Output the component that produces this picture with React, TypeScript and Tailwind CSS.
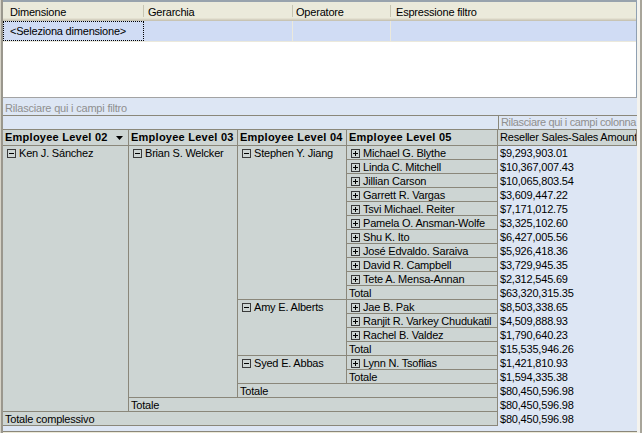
import React from 'react';

const line = 'border-[#8a877a]';
const cell = `bg-[#cdd5d3] border-r border-b ${line} whitespace-nowrap leading-[14px]`;

function Toggle({ plus }: { plus?: boolean }) {
  return (
    <svg width="9" height="9" viewBox="0 0 9 9" className="shrink-0 mt-[3px]">
      <rect x="0.5" y="0.5" width="8" height="8" fill="none" stroke="#3a3a3a" />
      <path d="M2 4.5h5" stroke="#000" />
      {plus && <path d="M4.5 2v5" stroke="#000" />}
    </svg>
  );
}

function Member({ name, plus, className = '' }: { name: string; plus?: boolean; className?: string }) {
  return (
    <div className={`${cell} ${className} flex items-start gap-[3px] pl-[4px]`}>
      <Toggle plus={plus} />
      <span>{name}</span>
    </div>
  );
}

function Plain({ text, className = '' }: { text: string; className?: string }) {
  return <div className={`${cell} ${className} pl-[2px]`}>{text}</div>;
}

function Value({ v }: { v: string }) {
  return <div className="pl-[2px] leading-[14px] whitespace-nowrap">{v}</div>;
}

const stephen = [
  ['Michael G. Blythe', '$9,293,903.01'],
  ['Linda C. Mitchell', '$10,367,007.43'],
  ['Jillian Carson', '$10,065,803.54'],
  ['Garrett R. Vargas', '$3,609,447.22'],
  ['Tsvi Michael. Reiter', '$7,171,012.75'],
  ['Pamela O. Ansman-Wolfe', '$3,325,102.60'],
  ['Shu K. Ito', '$6,427,005.56'],
  ['José Edvaldo. Saraiva', '$5,926,418.36'],
  ['David R. Campbell', '$3,729,945.35'],
  ['Tete A. Mensa-Annan', '$2,312,545.69'],
];

const amy = [
  ['Jae B. Pak', '$8,503,338.65'],
  ['Ranjit R. Varkey Chudukatil', '$4,509,888.93'],
  ['Rachel B. Valdez', '$1,790,640.23'],
];

function Arrow() {
  return (
    <svg width="7" height="4" viewBox="0 0 7 4" className="ml-[8px] shrink-0">
      <path d="M0 0h7L3.5 4z" fill="#000" />
    </svg>
  );
}

export default function App() {
  return (
    <div className="w-[642px] h-[433px] flex bg-[#ece9d8] text-[11px] tracking-[-0.2px] text-black font-['Liberation_Sans',Arial,sans-serif] overflow-hidden">
      {/* left frame */}
      <div className="w-[3px] bg-[#9a978d] border-l border-[#d6d3c7]" />

      <div className="w-[634px] flex flex-col">
        {/* filter grid */}
        <div className="h-[98px] bg-white border-t-2 border-t-[#98a3ad] border-b border-b-[#a3a3a3] border-r border-r-[#8fa0b2] flex flex-col">
          <div className="flex h-[19px] bg-[#ebeadb] pt-[2px] leading-[17px] shadow-[inset_0_-1px_0_#c8c4b3,inset_0_-2px_0_#d6d2c2,inset_0_-3px_0_#e3e0d0]">
            <div className="w-[140px] pl-[7px]">Dimensione</div>
            <div className="w-px bg-[#c7c5b2] mt-px mb-[4px]" />
            <div className="w-[148px] pl-[4px]">Gerarchia</div>
            <div className="w-px bg-[#c7c5b2] mt-px mb-[4px]" />
            <div className="w-[97px] pl-[3px]">Operatore</div>
            <div className="w-px bg-[#c7c5b2] mt-px mb-[4px]" />
            <div className="flex-1 pl-[5px]">Espressione filtro</div>
          </div>
          <div className="flex h-[21px] bg-[#d0dcf4] border-b border-[#ebe9dc] leading-[18px]">
            <div className="w-[141px] border border-dotted border-black pl-[6px]">&lt;Seleziona dimensione&gt;</div>
            <div className="w-[148px]" />
            <div className="w-px bg-[#ebe9dc]" />
            <div className="w-[97px]" />
            <div className="w-px bg-[#ebe9dc]" />
            <div className="flex-1" />
          </div>
        </div>

        {/* pivot */}
        <div className="flex-1 bg-[#dde6f4] border-b border-[#8a877a] mb-px flex flex-col">
          <div className={`h-[18px] border-b ${line} pl-[2px] pt-[3px] leading-[14px] text-[#8f8f8f]`}>Rilasciare qui i campi filtro</div>
          <div className="h-[13px] flex">
            <div className="w-[495px]" />
            <div className={`flex-1 border-l ${line} pl-[2px] leading-[13px] tracking-[-0.35px] text-[#8f8f8f] whitespace-nowrap`}>
              Rilasciare qui i campi colonna
            </div>
          </div>
          <div className={`h-[17px] flex border-y ${line} font-bold tracking-[0.25px] leading-[15px] bg-[#cdd5d3]`}>
            <div className={`w-[126px] border-r ${line} pl-[2px] flex items-center whitespace-nowrap`}>
              Employee Level 02
              <Arrow />
            </div>
            <div className={`w-[109px] border-r ${line} pl-[2px] whitespace-nowrap overflow-hidden`}>Employee Level 03</div>
            <div className={`w-[109px] border-r ${line} pl-[2px] whitespace-nowrap overflow-hidden`}>Employee Level 04</div>
            <div className={`w-[151px] border-r ${line} pl-[2px] whitespace-nowrap`}>Employee Level 05</div>
            <div className={`w-[139px] border-r ${line} pl-[2px] font-normal tracking-[-0.2px] whitespace-nowrap overflow-hidden`}>Reseller Sales-Sales Amount</div>
          </div>

          <div className="grid grid-cols-[126px_109px_109px_151px_139px] auto-rows-[14px]">
            <Member name="Ken J. Sánchez" className="row-span-19" />
            <Member name="Brian S. Welcker" className="row-span-18" />
            <Member name="Stephen Y. Jiang" className="row-span-11" />
            {stephen.map(([n, v]) => (
              <React.Fragment key={n}>
                <Member name={n} plus />
                <Value v={v} />
              </React.Fragment>
            ))}
            <Plain text="Total" />
            <Value v="$63,320,315.35" />

            <Member name="Amy E. Alberts" className="row-span-4" />
            {amy.map(([n, v]) => (
              <React.Fragment key={n}>
                <Member name={n} plus />
                <Value v={v} />
              </React.Fragment>
            ))}
            <Plain text="Total" />
            <Value v="$15,535,946.26" />

            <Member name="Syed E. Abbas" className="row-span-2" />
            <Member name="Lynn N. Tsoflias" plus />
            <Value v="$1,421,810.93" />
            <Plain text="Totale" />
            <Value v="$1,594,335.38" />

            <Plain text="Totale" className="col-span-2" />
            <Value v="$80,450,596.98" />
            <Plain text="Totale" className="col-span-3" />
            <Value v="$80,450,596.98" />
            <Plain text="Totale complessivo" className="col-span-4" />
            <Value v="$80,450,596.98" />
          </div>
        </div>
      </div>

      {/* right frame */}
      <div className="w-[5px] bg-[#f4f3ee] border-r-2 border-[#a8a59a]" />
    </div>
  );
}
